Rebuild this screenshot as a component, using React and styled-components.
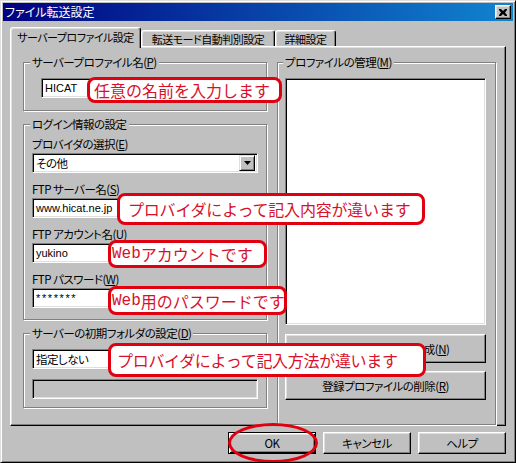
import React from "react";
import styled, { createGlobalStyle } from "styled-components";

const UI = `"Noto Sans CJK JP", "Liberation Sans", sans-serif`;

const Global = createGlobalStyle`
  html, body { margin: 0; padding: 0; background: #c0c0c0; }
  body { font-family: ${UI}; font-size: 12px; }
  *, *::before, *::after { box-sizing: border-box; }
`;

const Window = styled.div`
  position: relative;
  width: 516px;
  height: 463px;
  background: #c0c0c0;
  border: 1px solid;
  border-color: #dfdfdf #000 #000 #dfdfdf;
  box-shadow: inset 1px 1px #fff, inset -1px -1px #808080;
  padding: 2px;
  display: flex;
  flex-direction: column;
  font-family: ${UI};
  font-size: 11.5px;
  letter-spacing: -0.5px;
  color: #000;
  font-feature-settings: "palt";
  overflow: hidden;
`;

const TitleBar = styled.div`
  height: 18px;
  flex: none;
  background: linear-gradient(to right, #000080, #1084d0);
  display: flex;
  align-items: center;
  justify-content: space-between;
  padding: 0 2px 0 2px;
  color: #fff;
  line-height: 18px;
`;

const TitleText = styled.span`
  font-size: 12px;
  letter-spacing: 0;
`;

const CloseButton = styled.div`
  width: 16px;
  height: 14px;
  background: #c0c0c0;
  border: 1px solid;
  border-color: #fff #000 #000 #fff;
  box-shadow: inset -1px -1px #808080, inset 1px 1px #dfdfdf;
  display: flex;
  align-items: center;
  justify-content: center;
`;

const Body = styled.div`
  flex: 1;
  display: flex;
  flex-direction: column;
  padding: 6px 7px 0 7px;
`;

const TabStrip = styled.div`
  height: 19px;
  display: flex;
  align-items: flex-end;
`;

const Tab = styled.div`
  position: relative;
  z-index: ${(p) => (p.$selected ? 2 : 1)};
  width: ${(p) => p.$w}px;
  height: ${(p) => (p.$selected ? 21 : 16)}px;
  margin-bottom: ${(p) => (p.$selected ? -2 : 0)}px;
  padding-bottom: ${(p) => (p.$selected ? 2 : 0)}px;
  background: #c0c0c0;
  border-top: 1px solid #fff;
  border-left: 1px solid #fff;
  border-right: 1px solid #000;
  border-radius: 3px 3px 0 0;
  box-shadow: inset -1px 0 #808080, inset 1px 1px #dfdfdf;
  display: flex;
  align-items: center;
  justify-content: center;
  white-space: nowrap;
  font-size: 11px;
  letter-spacing: -0.5px;
  line-height: 14px;
`;

const Panel = styled.div`
  height: 380px;
  flex: none;
  border: 1px solid;
  border-color: #fff #000 #000 #fff;
  box-shadow: inset -1px -1px #808080, inset 1px 1px #dfdfdf;
  padding: 8px 8px 0 12px;
  display: flex;
  gap: 10px;
`;

const Column = styled.div`
  width: 244px;
  display: flex;
  flex-direction: column;
  gap: 6px;
`;

const Group = styled.fieldset`
  margin: 0;
  min-width: 0;
  width: ${(p) => p.$w}px;
  border: 1px solid #808080;
  box-shadow: inset 1px 1px #fff, 1px 1px #fff;
  padding: ${(p) => p.$pad};
  display: flex;
  flex-direction: column;
  gap: ${(p) => p.$gap || 0}px;
`;

const Legend = styled.legend`
  margin-left: -2px;
  padding: 0 2px;
  height: 14px;
  line-height: 14px;
  background: #c0c0c0;
`;

const Field = styled.div`
  display: flex;
  flex-direction: column;
  gap: 2px;
`;

const Label = styled.div`
  line-height: 14px;
  height: 14px;
  white-space: nowrap;
`;

const Acc = styled.span`
  text-decoration: underline;
  text-underline-offset: 1px;
`;

const Sunken = styled.div`
  height: 20px;
  width: ${(p) => p.$w || 226}px;
  margin-left: ${(p) => p.$indent || 0}px;
  background: ${(p) => (p.$disabled ? "#c0c0c0" : "#fff")};
  border: 1px solid;
  border-color: #808080 #fff #fff #808080;
  box-shadow: inset 1px 1px #000, inset -1px -1px #dfdfdf;
  display: flex;
  align-items: center;
  padding: 0 2px 0 3px;
  white-space: nowrap;
`;

const ValueText = styled.span`
  font-family: "Liberation Sans", "Noto Sans CJK JP", sans-serif;
  font-size: 11px;
  letter-spacing: ${(p) => p.$ls || 0}px;
  flex: 1;
`;

const ComboText = styled.span`
  flex: 1;
  line-height: 14px;
`;

const DropButton = styled.div`
  width: 16px;
  height: 16px;
  background: #c0c0c0;
  border: 1px solid;
  border-color: #dfdfdf #000 #000 #dfdfdf;
  box-shadow: inset 1px 1px #fff, inset -1px -1px #808080;
  display: flex;
  align-items: center;
  justify-content: center;
`;

const ListBox = styled.div`
  height: 247px;
  width: 201px;
  background: #fff;
  border: 1px solid;
  border-color: #808080 #fff #fff #808080;
  box-shadow: inset 1px 1px #000, inset -1px -1px #dfdfdf;
`;

const Button = styled.div`
  width: ${(p) => p.$w}px;
  height: ${(p) => p.$h}px;
  margin-top: ${(p) => p.$mt || 0}px;
  background: #c0c0c0;
  border: 1px solid;
  border-color: ${(p) => (p.$default ? "#000" : "#fff #000 #000 #fff")};
  box-shadow: ${(p) =>
    p.$default
      ? "inset 1px 1px #fff, inset -1px -1px #000, inset 2px 2px #dfdfdf, inset -2px -2px #808080"
      : "inset -1px -1px #808080, inset 1px 1px #dfdfdf"};
  display: flex;
  align-items: center;
  justify-content: center;
  white-space: nowrap;
  line-height: 14px;
`;

const ButtonRow = styled.div`
  display: flex;
  justify-content: flex-end;
  gap: 7px;
  margin-top: 6px;
`;

const Note = styled.div`
  position: absolute;
  z-index: 5;
  left: ${(p) => p.$x - 1}px;
  top: ${(p) => p.$y - 1}px;
  width: ${(p) => p.$w}px;
  height: ${(p) => p.$h}px;
  border: 3px solid #e0000f;
  border-radius: 8px;
  background: #fff;
  display: flex;
  align-items: center;
  padding-left: ${(p) => p.$pad}px;
  color: #d8102a;
  font-family: "Noto Sans CJK JP", sans-serif;
  font-feature-settings: normal;
  font-size: 16px;
  letter-spacing: ${(p) => p.$ls || 0}px;
  white-space: nowrap;
  line-height: 18px;
`;

const Mono = styled.span`
  font-family: "Liberation Mono", monospace;
  font-size: 16px;
`;

const Ring = styled.div`
  position: absolute;
  z-index: 5;
  left: 227px;
  top: 422px;
  width: 90px;
  height: 40px;
  border: 3px solid #e0000f;
  border-radius: 50%;
  pointer-events: none;
`;

const CloseGlyph = () => (
  <svg width="8" height="7" viewBox="0 0 8 7">
    <path d="M0 0h2l2 2 2-2h2v1L6 3.5 8 6v1H6L4 5 2 7H0V6l2-2.5L0 1z" fill="#000" />
  </svg>
);

const ArrowGlyph = () => (
  <svg width="7" height="4" viewBox="0 0 7 4">
    <path d="M0 0h7L3.5 4z" fill="#000" />
  </svg>
);

const Combo = ({ children, w }) => (
  <Sunken $w={w}>
    <ComboText>{children}</ComboText>
    <DropButton>
      <ArrowGlyph />
    </DropButton>
  </Sunken>
);

export default function App() {
  return (
    <>
      <Global />
      <Window>
        <TitleBar>
          <TitleText>ファイル転送設定</TitleText>
          <CloseButton>
            <CloseGlyph />
          </CloseButton>
        </TitleBar>
        <Body>
          <TabStrip>
            <Tab $selected $w={131}>サーバープロファイル設定</Tab>
            <Tab $w={134}>転送モード自動判別設定</Tab>
            <Tab $w={61}>詳細設定</Tab>
          </TabStrip>
          <Panel>
            <Column>
              <Group $w={244} $pad="9px 8px 12px 8px">
                <Legend>
                  サーバープロファイル名(<Acc>P</Acc>)
                </Legend>
                <Sunken $w={217} $indent={9}>
                  <ValueText>HICAT</ValueText>
                </Sunken>
              </Group>
              <Group $w={244} $pad="6px 8px 11px 8px" $gap={9}>
                <Legend>ログイン情報の設定</Legend>
                <Field>
                  <Label>
                    プロバイダの選択(<Acc>E</Acc>)
                  </Label>
                  <Combo>その他</Combo>
                </Field>
                <Field>
                  <Label>
                    FTP サーバー名(<Acc>S</Acc>)
                  </Label>
                  <Sunken>
                    <ValueText>www.hicat.ne.jp</ValueText>
                  </Sunken>
                </Field>
                <Field>
                  <Label>
                    FTP アカウント名(<Acc>U</Acc>)
                  </Label>
                  <Sunken>
                    <ValueText>yukino</ValueText>
                  </Sunken>
                </Field>
                <Field>
                  <Label>
                    FTP パスワード(<Acc>W</Acc>)
                  </Label>
                  <Sunken>
                    <ValueText $ls={1.6}>*******</ValueText>
                  </Sunken>
                </Field>
              </Group>
              <Group $w={244} $pad="9px 8px 8px 8px" $gap={10}>
                <Legend>
                  サーバーの初期フォルダの設定(<Acc>D</Acc>)
                </Legend>
                <Combo>指定しない</Combo>
                <Sunken $disabled />
              </Group>
            </Column>
            <Group $w={219} $pad="9px 9px 8px 7px" $gap={0}>
              <Legend>
                プロファイルの管理(<Acc>M</Acc>)
              </Legend>
              <ListBox />
              <Button $w={201} $h={29} $mt={9}>
                新規プロファイルの作成(<Acc>N</Acc>)
              </Button>
              <Button $w={201} $h={29} $mt={8}>
                登録プロファイルの削除(<Acc>R</Acc>)
              </Button>
            </Group>
          </Panel>
          <ButtonRow>
            <Button $default $w={88} $h={22}>OK</Button>
            <Button $w={88} $h={22}>キャンセル</Button>
            <Button $w={88} $h={22}>ヘルプ</Button>
          </ButtonRow>
        </Body>

        <Note $x={87} $y={77} $w={195} $h={26} $pad={4}>
          任意の名前を入力します
        </Note>
        <Note $x={117} $y={193} $w={308} $h={32} $pad={8} $ls={-0.2}>
          プロバイダによって記入内容が違います
        </Note>
        <Note $x={108} $y={240} $w={159} $h={28} $pad={1}>
          <Mono>Web</Mono>アカウントです
        </Note>
        <Note $x={108} $y={286} $w={179} $h={29} $pad={1}>
          <Mono>Web</Mono>用のパスワードです
        </Note>
        <Note $x={108} $y={343} $w={318} $h={34} $pad={6} $ls={-0.3}>
          プロバイダによって記入方法が違います
        </Note>
        <Ring />
      </Window>
    </>
  );
}
